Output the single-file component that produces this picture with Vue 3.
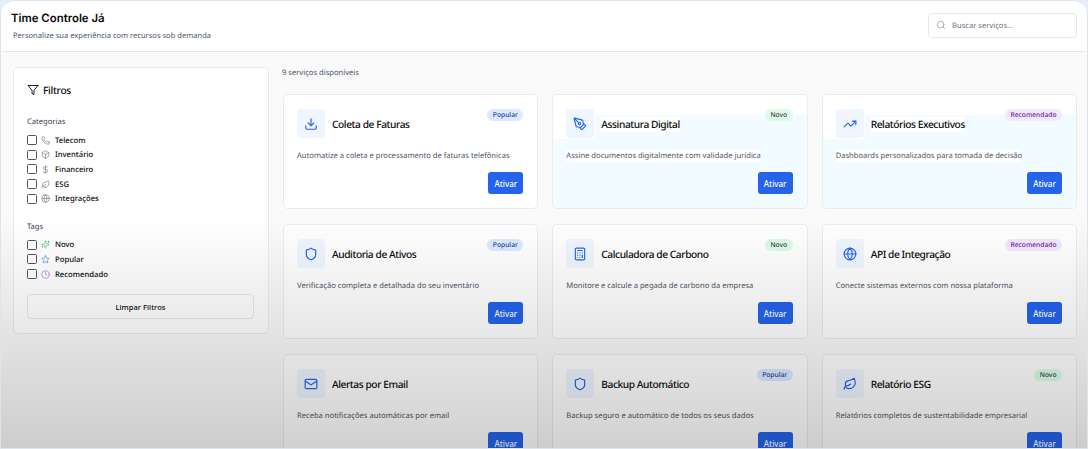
<script setup>
const categories = [
  { label: 'Telecom', icon: 'phone' },
  { label: 'Inventário', icon: 'box' },
  { label: 'Financeiro', icon: 'dollar' },
  { label: 'ESG', icon: 'leaf' },
  { label: 'Integrações', icon: 'globe' },
]

const tags = [
  { label: 'Novo', icon: 'sparkles', color: '#22c55e' },
  { label: 'Popular', icon: 'star', color: '#3b82f6' },
  { label: 'Recomendado', icon: 'clock', color: '#a855f7' },
]

const services = [
  { title: 'Coleta de Faturas', text: 'Automatize a coleta e processamento de faturas telefônicas', icon: 'download', tag: 'Popular' },
  { title: 'Assinatura Digital', text: 'Assine documentos digitalmente com validade jurídica', icon: 'pen', tag: 'Novo', tinted: true },
  { title: 'Relatórios Executivos', text: 'Dashboards personalizados para tomada de decisão', icon: 'trend', tag: 'Recomendado', tinted: true },
  { title: 'Auditoria de Ativos', text: 'Verificação completa e detalhada do seu inventário', icon: 'shield', tag: 'Popular' },
  { title: 'Calculadora de Carbono', text: 'Monitore e calcule a pegada de carbono da empresa', icon: 'calc', tag: 'Novo' },
  { title: 'API de Integração', text: 'Conecte sistemas externos com nossa plataforma', icon: 'globe', tag: 'Recomendado' },
  { title: 'Alertas por Email', text: 'Receba notificações automáticas por email', icon: 'mail', tag: null },
  { title: 'Backup Automático', text: 'Backup seguro e automático de todos os seus dados', icon: 'shield', tag: 'Popular' },
  { title: 'Relatório ESG', text: 'Relatórios completos de sustentabilidade empresarial', icon: 'leaf', tag: 'Novo' },
]

const icons = {
  phone: '<path d="M22 16.92v3a2 2 0 0 1-2.18 2 19.79 19.79 0 0 1-8.63-3.07 19.5 19.5 0 0 1-6-6 19.79 19.79 0 0 1-3.07-8.67A2 2 0 0 1 4.11 2h3a2 2 0 0 1 2 1.72c.13.96.36 1.9.7 2.81a2 2 0 0 1-.45 2.11L8.09 9.91a16 16 0 0 0 6 6l1.27-1.27a2 2 0 0 1 2.11-.45c.91.34 1.85.57 2.81.7A2 2 0 0 1 22 16.92z"/>',
  box: '<path d="M21 8a2 2 0 0 0-1-1.73l-7-4a2 2 0 0 0-2 0l-7 4A2 2 0 0 0 3 8v8a2 2 0 0 0 1 1.73l7 4a2 2 0 0 0 2 0l7-4A2 2 0 0 0 21 16Z"/><path d="m3.3 7 8.7 5 8.7-5"/><path d="M12 22V12"/>',
  dollar: '<line x1="12" x2="12" y1="2" y2="22"/><path d="M17 5H9.5a3.5 3.5 0 0 0 0 7h5a3.5 3.5 0 0 1 0 7H6"/>',
  leaf: '<path d="M11 20A7 7 0 0 1 9.8 6.1C15.5 5 17 4.48 19 2c1 2 2 4.18 2 8 0 5.5-4.78 10-10 10Z"/><path d="M2 21c0-3 1.85-5.36 5.08-6C9.5 14.52 12 13 13 12"/>',
  globe: '<circle cx="12" cy="12" r="10"/><path d="M12 2a14.5 14.5 0 0 0 0 20 14.5 14.5 0 0 0 0-20"/><path d="M2 12h20"/>',
  sparkles: '<path d="M9.94 15.5A2 2 0 0 0 8.5 14.06l-6.14-1.58a.5.5 0 0 1 0-.96L8.5 9.94A2 2 0 0 0 9.94 8.5l1.58-6.14a.5.5 0 0 1 .96 0L14.06 8.5A2 2 0 0 0 15.5 9.94l6.14 1.58a.5.5 0 0 1 0 .96L15.5 14.06a2 2 0 0 0-1.44 1.44l-1.58 6.14a.5.5 0 0 1-.96 0z"/><path d="M20 3v4"/><path d="M22 5h-4"/><path d="M4 17v2"/><path d="M5 18H3"/>',
  star: '<polygon points="12 2 15.09 8.26 22 9.27 17 14.14 18.18 21.02 12 17.77 5.82 21.02 7 14.14 2 9.27 8.91 8.26 12 2"/>',
  clock: '<circle cx="12" cy="12" r="10"/><polyline points="12 6 12 12 16 14"/>',
  download: '<path d="M21 15v4a2 2 0 0 1-2 2H5a2 2 0 0 1-2-2v-4"/><polyline points="7 10 12 15 17 10"/><line x1="12" x2="12" y1="15" y2="3"/>',
  pen: '<path d="M15.707 21.293a1 1 0 0 1-1.414 0l-1.586-1.586a1 1 0 0 1 0-1.414l5.586-5.586a1 1 0 0 1 1.414 0l1.586 1.586a1 1 0 0 1 0 1.414z"/><path d="m18 13-1.375-6.874a1 1 0 0 0-.746-.776L3.235 2.028a1 1 0 0 0-1.207 1.207L5.35 15.879a1 1 0 0 0 .776.746L13 18"/><path d="m2.3 2.3 7.286 7.286"/><circle cx="11" cy="11" r="2"/>',
  trend: '<polyline points="22 7 13.5 15.5 8.5 10.5 2 17"/><polyline points="16 7 22 7 22 13"/>',
  shield: '<path d="M20 13c0 5-3.5 7.5-7.66 8.95a1 1 0 0 1-.67-.01C7.5 20.5 4 18 4 13V6a1 1 0 0 1 1-1c2 0 4.5-1.2 6.24-2.72a1.17 1.17 0 0 1 1.52 0C14.51 3.81 17 5 19 5a1 1 0 0 1 1 1z"/>',
  calc: '<rect width="16" height="20" x="4" y="2" rx="2"/><line x1="8" x2="16" y1="6" y2="6"/><line x1="16" x2="16" y1="14" y2="18"/><path d="M16 10h.01"/><path d="M12 10h.01"/><path d="M8 10h.01"/><path d="M12 14h.01"/><path d="M8 14h.01"/><path d="M12 18h.01"/><path d="M8 18h.01"/>',
  mail: '<rect width="20" height="16" x="2" y="4" rx="2"/><path d="m22 7-8.97 5.7a1.94 1.94 0 0 1-2.06 0L2 7"/>',
}
</script>

<template>
  <div class="page">
    <header class="topbar">
      <div>
        <h1>Time Controle Já</h1>
        <p>Personalize sua experiência com recursos sob demanda</p>
      </div>
      <label class="search">
        <svg class="ico" viewBox="0 0 24 24"><circle cx="11" cy="11" r="8" /><path d="m21 21-4.3-4.3" /></svg>
        <span>Buscar serviços...</span>
      </label>
    </header>

    <div class="content">
      <aside class="filters">
        <div class="filters-title">
          <svg class="ico" viewBox="0 0 24 24"><polygon points="22 3 2 3 10 12.46 10 19 14 21 14 12.46 22 3" /></svg>
          <span>Filtros</span>
        </div>

        <h3>Categorias</h3>
        <ul>
          <li v-for="c in categories" :key="c.label">
            <i class="check"></i>
            <svg class="ico" viewBox="0 0 24 24" v-html="icons[c.icon]"></svg>
            <span>{{ c.label }}</span>
          </li>
        </ul>

        <h3 class="tags-head">Tags</h3>
        <ul>
          <li v-for="t in tags" :key="t.label">
            <i class="check"></i>
            <svg class="ico" viewBox="0 0 24 24" :style="{ color: t.color }" v-html="icons[t.icon]"></svg>
            <span>{{ t.label }}</span>
          </li>
        </ul>

        <button class="clear">Limpar Filtros</button>
      </aside>

      <main class="services">
        <p class="count">9 serviços disponíveis</p>
        <div class="grid">
          <article v-for="s in services" :key="s.title" class="card" :class="{ tinted: s.tinted }">
            <div class="card-top">
              <div class="card-icon">
                <svg class="ico" viewBox="0 0 24 24" v-html="icons[s.icon]"></svg>
              </div>
              <h2>{{ s.title }}</h2>
              <span v-if="s.tag" class="tag" :class="s.tag.toLowerCase()">{{ s.tag }}</span>
            </div>
            <p class="desc">{{ s.text }}</p>
            <div class="card-foot">
              <button class="activate">Ativar</button>
            </div>
          </article>
        </div>
      </main>
    </div>

    <div class="shade"></div>
  </div>
</template>

<style scoped>
.page {
  position: relative;
  height: 449px;
  box-sizing: border-box;
  overflow: hidden;
  border: 1px solid #dbe4ef;
  border-radius: 14px 14px 0 0;
  background: #fafafa;
  font-family: "Noto Sans", "Liberation Sans", sans-serif;
  color: #0a0a0a;
  text-rendering: geometricPrecision;
}

.topbar {
  height: 51px;
  box-sizing: border-box;
  display: flex;
  align-items: center;
  justify-content: space-between;
  padding: 0 10px;
  background: #fff;
  border-bottom: 1px solid #e5e7eb;
}

h1 {
  margin: 0 0 5px;
  font-family: Inter, "Liberation Sans", sans-serif;
  font-size: 11.4px;
  line-height: 15px;
  font-weight: 600;
}

.topbar p {
  margin: 0 0 0 2px;
  font-size: 7.55px;
  line-height: 11px;
  color: #475569;
}

.search {
  width: 149px;
  height: 25px;
  box-sizing: border-box;
  display: flex;
  align-items: center;
  gap: 6px;
  margin-top: -2px;
  padding-left: 7px;
  border: 1px solid #e5e7eb;
  border-radius: 4px;
  background: #fff;
  font-size: 7.6px;
  color: #6b7280;
}

.search span {
  padding-top: 1px;
}

.search .ico {
  width: 10px;
  height: 10px;
  color: #9ca3af;
}

.ico {
  fill: none;
  stroke: currentColor;
  stroke-width: 2;
  stroke-linecap: round;
  stroke-linejoin: round;
  flex: none;
}

.content {
  display: flex;
  align-items: flex-start;
  gap: 14px;
  padding: 15px 10px 0 12px;
}

.filters {
  width: 256px;
  height: 267px;
  box-sizing: border-box;
  flex: none;
  padding: 14px 14px 14px 13px;
  background: #fff;
  border: 1px solid #e9ebef;
  border-radius: 5px;
}

.filters-title {
  display: flex;
  align-items: center;
  gap: 4px;
  height: 16px;
  margin: 0 0 18px;
  font-size: 10.2px;
  letter-spacing: -0.3px;
  font-weight: 500;
}

.filters-title .ico {
  width: 12px;
  height: 12px;
  stroke-width: 1.8;
}

h3 {
  margin: 0 0 7px;
  font-size: 7.6px;
  line-height: 12px;
  font-weight: 400;
  color: #334155;
}

.tags-head {
  margin-top: 17px;
}

ul {
  margin: 0;
  padding: 0;
  list-style: none;
  display: flex;
  flex-direction: column;
  gap: 4.7px;
}

li {
  display: flex;
  align-items: center;
  height: 10px;
  font-size: 7.7px;
  font-weight: 500;
}

li span {
  padding-top: 1px;
}

.check {
  width: 10px;
  height: 10px;
  box-sizing: border-box;
  margin-right: 4px;
  border: 1px solid #52525b;
  border-radius: 1.5px;
  background: #fff;
}

li .ico {
  width: 9px;
  height: 9px;
  margin-right: 5px;
  color: #6b7280;
  stroke-width: 1.6;
}

.clear {
  display: block;
  width: 100%;
  height: 25px;
  margin-top: 15px;
  border: 1px solid #e5e7eb;
  border-radius: 4px;
  background: #fff;
  font: 500 7.6px "Noto Sans", "Liberation Sans", sans-serif;
  color: #0a0a0a;
}

.services {
  flex: 1;
  min-width: 0;
}

.count {
  margin: 0 0 15px -1px;
  font-size: 7.6px;
  line-height: 12px;
  color: #475569;
}

.grid {
  display: grid;
  grid-template-columns: repeat(3, 1fr);
  gap: 15px 14px;
}

.card {
  position: relative;
  height: 115px;
  box-sizing: border-box;
  padding: 14px 14px 14px 13px;
  background: #fff;
  border: 1px solid #e9ebef;
  border-radius: 5px;
  overflow: hidden;
}

.tinted::before {
  content: "";
  position: absolute;
  inset: 0;
  background: #f2fbff;
  clip-path: polygon(42px 20px, 100% 20px, 100% 100%, 0 100%, 0 44px, 42px 44px);
}

.card > * {
  position: relative;
}

.card-top {
  display: flex;
  align-items: center;
  gap: 7px;
  height: 29px;
}

.card-icon {
  width: 28px;
  height: 29px;
  flex: none;
  display: flex;
  align-items: center;
  justify-content: center;
  border-radius: 4px;
  background: #eff6ff;
  color: #2563eb;
}

.card-icon .ico {
  width: 14px;
  height: 14px;
}

h2 {
  margin: 1px 0 0;
  font-size: 10.2px;
  letter-spacing: -0.43px;
  line-height: 15px;
  font-weight: 500;
  background: #fff;
}

.tag {
  position: absolute;
  top: 0;
  right: 0;
  height: 12px;
  padding: 0 5.5px;
  border-radius: 6px;
  font-size: 6.7px;
  line-height: 12px;
  font-weight: 500;
}

.popular {
  background: #dbeafe;
  color: #1e40af;
}

.novo {
  background: #dcfce7;
  color: #374151;
}

.recomendado {
  background: #f3e8ff;
  color: #6b21a8;
}

.desc {
  width: fit-content;
  margin: 12px 0 0;
  font-size: 7.6px;
  line-height: 12px;
  color: #4b5563;
  background: #fff;
}

.card-foot {
  display: flex;
  justify-content: flex-end;
  margin-top: 10px;
}

.activate {
  width: 35px;
  height: 22px;
  padding: 0;
  border: 0;
  border-radius: 3px;
  background: #2563eb;
  color: #fff;
  font: 500 8px "Noto Sans", "Liberation Sans", sans-serif;
}

.shade {
  position: absolute;
  inset: 0;
  pointer-events: none;
  background: linear-gradient(to bottom, rgba(0, 0, 0, 0) 48%, rgba(0, 0, 0, 0.18) 100%);
}
</style>

<style>
html,
body {
  margin: 0;
  background: #e8eef6;
}
</style>
